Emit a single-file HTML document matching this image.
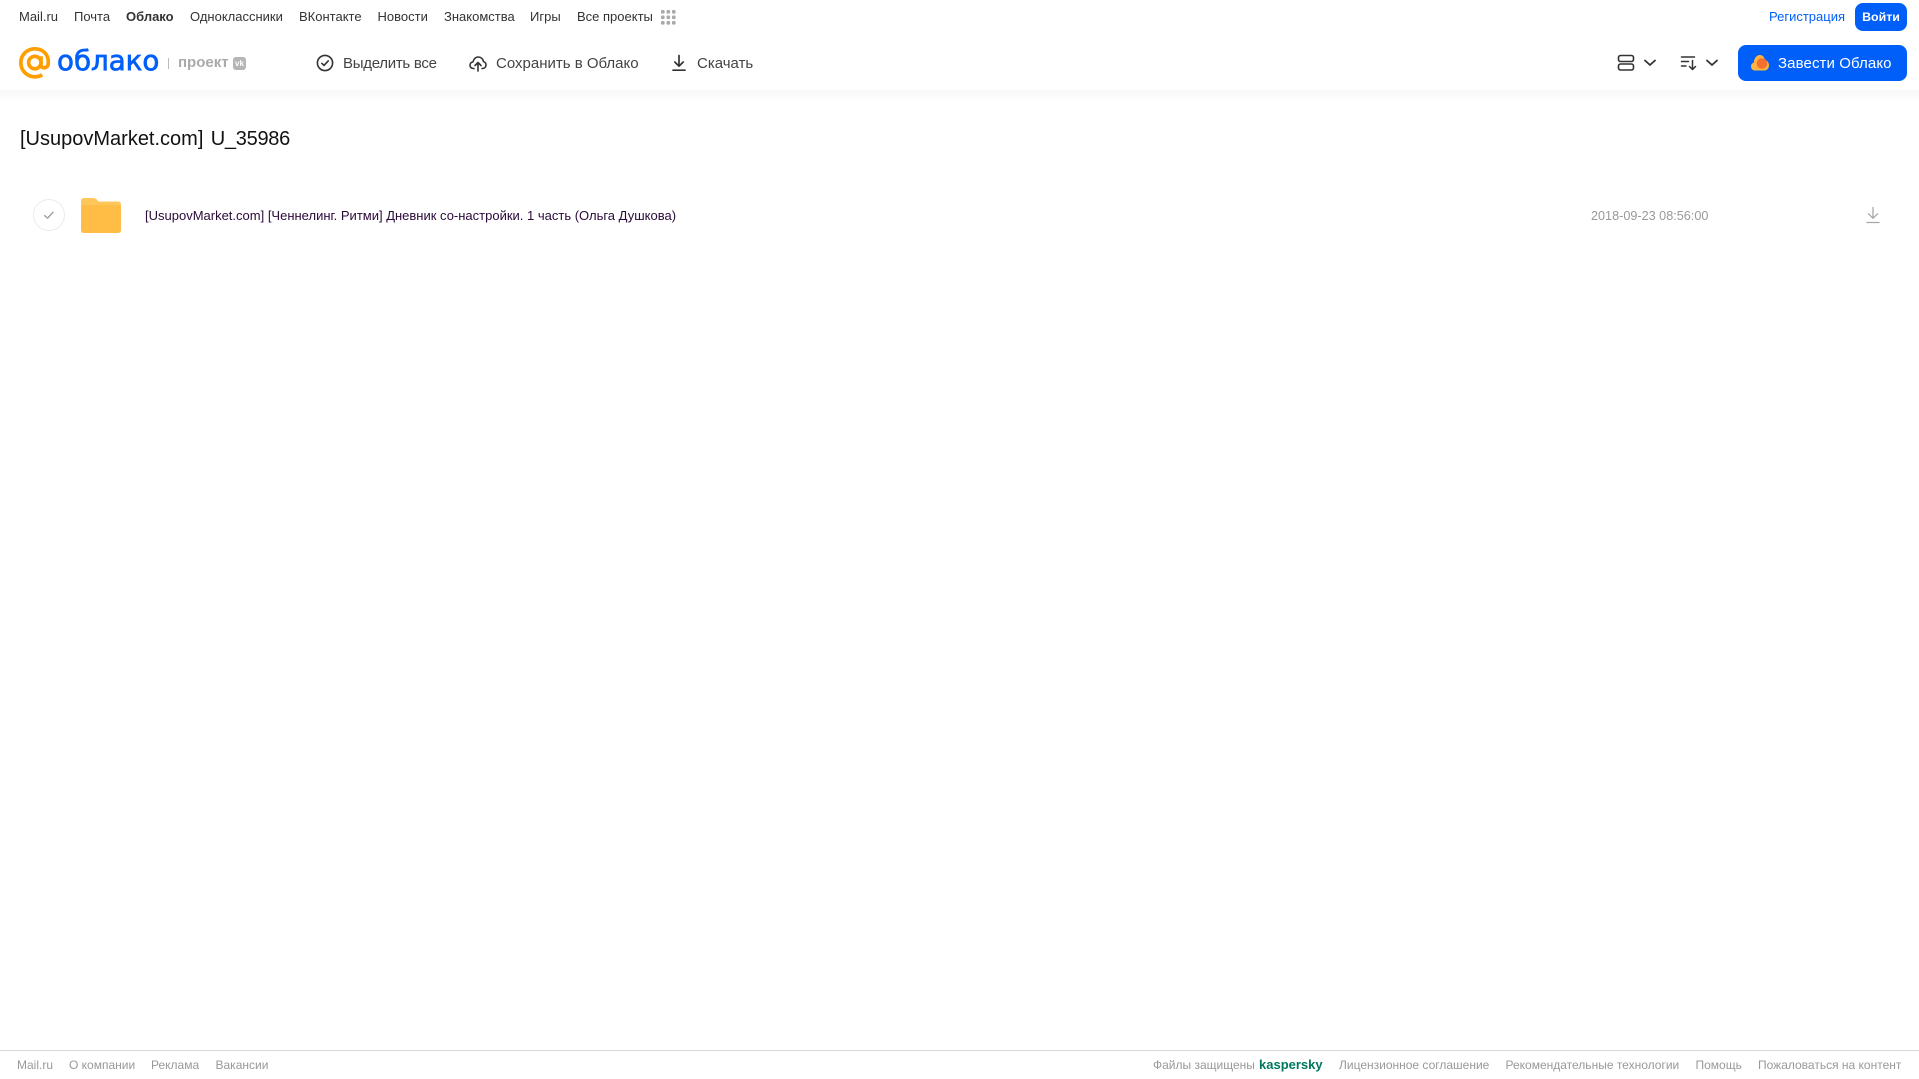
<!DOCTYPE html>
<html lang="ru">
<head>
<meta charset="utf-8">
<title>Облако</title>
<style>
html,body{margin:0;padding:0;background:#fff;width:1919px;height:1079px;overflow:hidden}
body{position:relative;font-family:"Liberation Sans","Noto Sans CJK SC",sans-serif}
.t{position:absolute;white-space:nowrap;line-height:20px;margin:0}
.n{font-size:13px;color:#333;top:7px}
.a{font-size:15px;color:#444;top:53.500px}
.f{font-size:12px;color:#999;top:1055px}
svg{position:absolute;overflow:visible}
</style>
</head>
<body>
<div style="position:absolute;left:0;top:90px;width:1919px;height:12px;background:linear-gradient(#f7f7f7,#fff)"></div>

<span class="t n" style="left:19px">Mail.ru</span>
<span class="t n" style="left:74px">Почта</span>
<span class="t n" style="left:126px;font-weight:bold">Облако</span>
<span class="t n" style="left:190px">Одноклассники</span>
<span class="t n" style="left:299px">ВКонтакте</span>
<span class="t n" style="left:377.500px">Новости</span>
<span class="t n" style="left:444px">Знакомства</span>
<span class="t n" style="left:530px">Игры</span>
<span class="t n" style="left:577px">Все проекты</span>
<svg style="left:661px;top:10px" width="15" height="15" fill="#aaa">
<rect x="0" y="0" width="3.6" height="3.6" rx="1"/><rect x="5.5" y="0" width="3.6" height="3.6" rx="1"/><rect x="11" y="0" width="3.6" height="3.6" rx="1"/>
<rect x="0" y="5.5" width="3.6" height="3.6" rx="1"/><rect x="5.5" y="5.5" width="3.6" height="3.6" rx="1"/><rect x="11" y="5.5" width="3.6" height="3.6" rx="1"/>
<rect x="0" y="11" width="3.6" height="3.6" rx="1"/><rect x="5.5" y="11" width="3.6" height="3.6" rx="1"/><rect x="11" y="11" width="3.6" height="3.6" rx="1"/>
</svg>

<svg style="left:19px;top:47px" width="32" height="32" viewBox="0 0 33 33" fill="none" stroke="#ff9e00" stroke-width="3.8">
<circle cx="16.3" cy="16" r="6.4"/>
<path d="M22.7 9.6V18.5C22.7 22.6 29.8 22.6 30.2 17.2C31 7.5 24.5 1.9 16.3 1.9C8.2 1.9 1.9 8.2 1.9 16.2C1.9 24.6 8.5 30.8 16.5 30.8C19.5 30.8 21.8 30 24 28.8"/>
</svg>
<span class="t" style="left:57px;top:44px;font-family:'DejaVu Sans',sans-serif;font-size:27.7px;line-height:34px;color:#005ff9;-webkit-text-stroke:.7px #005ff9">облако</span>
<div style="position:absolute;left:168px;top:58px;width:1px;height:11px;background:#bbb"></div>
<span class="t" style="left:178px;top:53px;font-size:15px;color:#aaa;font-weight:bold">проект</span>
<div style="position:absolute;left:233px;top:57px;width:13px;height:13px;border-radius:3px;background:#b5b5b5;color:#fff;font:bold 8px/13px 'Liberation Sans',sans-serif;text-align:center">vk</div>

<svg style="left:316px;top:54px" width="18" height="18" viewBox="0 0 18 18" fill="none" stroke="#333" stroke-width="1.6" stroke-linecap="round" stroke-linejoin="round">
<circle cx="9" cy="9" r="7.6"/><path d="M5.8 9.3L8 11.4L12.2 6.9"/>
</svg>
<span class="t a" style="left:343px;letter-spacing:-.28px">Выделить все</span>

<svg style="left:469px;top:54px" width="18" height="18" viewBox="0 0 18 18" fill="none" stroke="#333" stroke-width="1.6" stroke-linecap="round" stroke-linejoin="round">
<path d="M5 14.5H4.4C2.4 14.5 1 13 1 11.2C1 9.4 2.3 8 4 7.9C4.5 5.1 6.6 3 9.3 3C12 3 14.1 5 14.5 7.6C16 8 17 9.4 17 11C17 13 15.6 14.5 13.6 14.5H13"/>
<path d="M9 17V9M6 11.5L9 8.5L12 11.5"/>
</svg>
<span class="t a" style="left:496px">Сохранить в Облако</span>

<svg style="left:670px;top:54px" width="18" height="18" viewBox="0 0 18 18" fill="none" stroke="#333" stroke-width="1.7" stroke-linecap="round" stroke-linejoin="round">
<path d="M9 1.5V12M4.8 8L9 12.2L13.2 8M3 16.2H15"/>
</svg>
<span class="t a" style="left:697px">Скачать</span>

<span class="t n" style="left:1769px;color:#005ff9">Регистрация</span>
<div style="position:absolute;left:1855px;top:3px;width:52px;height:28px;border-radius:8px;background:#005ff9;color:#fff;font-size:12.4px;line-height:28px;text-align:center;font-weight:bold">Войти</div>

<svg style="left:1617px;top:54px" width="18" height="18" viewBox="0 0 18 18" fill="none" stroke="#333" stroke-width="1.6">
<rect x="1.5" y="1.5" width="15" height="6" rx="2"/><rect x="1.5" y="10" width="15" height="6" rx="2"/>
</svg>
<svg style="left:1643px;top:58px" width="14" height="10" viewBox="0 0 14 10" fill="none" stroke="#333" stroke-width="1.8" stroke-linecap="round" stroke-linejoin="round"><path d="M2 2.5L7 7L12 2.5"/></svg>
<svg style="left:1680px;top:54px" width="18" height="18" viewBox="0 0 18 18" fill="none" stroke="#333" stroke-width="1.5" stroke-linecap="round" stroke-linejoin="round">
<path d="M1.5 3H14.5M1.5 7.5H8.5M1.5 12H6M12.5 6.5V15.5M9.5 12.5L12.5 15.5L15.5 12.5"/>
</svg>
<svg style="left:1705px;top:58px" width="14" height="10" viewBox="0 0 14 10" fill="none" stroke="#333" stroke-width="1.8" stroke-linecap="round" stroke-linejoin="round"><path d="M2 2.5L7 7L12 2.5"/></svg>

<div style="position:absolute;left:1738px;top:45px;width:169px;height:36px;border-radius:8px;background:#005ff9"></div>
<svg style="left:1750px;top:54px" width="20" height="18" viewBox="0 0 20 18">
<path d="M5 16.500C2.400 16.500 1 14.500 1 12.500C1 10.500 2.200 9 3.800 8.600C4 4.500 6.500 1 9.800 1C12.500 1 14.300 3 14.900 6C17.400 6.400 19 8.700 19 11.300C19 14 17.200 16.500 14.600 16.500Z" fill="#ffb340"/>
<circle cx="12" cy="9.500" r="5.300" fill="#f4702c"/>
</svg>
<span class="t a" style="left:1778px;color:#fff;letter-spacing:.1px">Завести Облако</span>

<h1 class="t" style="left:20px;top:126px;font-size:20px;line-height:26px;font-weight:normal;color:#111;word-spacing:1.800px">[UsupovMarket.com] <span style="letter-spacing:-.28px">U_35986</span></h1>

<div style="position:absolute;left:33px;top:199px;width:30px;height:30px;border:1px solid #ececec;border-radius:50%"></div>
<svg style="left:43px;top:209px" width="12" height="12" viewBox="0 0 12 12" fill="none" stroke="#999" stroke-width="1.3" stroke-linecap="round" stroke-linejoin="round"><path d="M1.7 6.6L4.6 9.2L10 3.2"/></svg>

<svg style="left:81px;top:198px" width="40" height="35" viewBox="0 0 40 35">
<path d="M0 3C0 1.300 1.300 0 3 0H12.500C14 0 15 .6 16 1.800L17.600 3.500H37C38.700 3.500 40 4.800 40 6.500V32C40 33.700 38.700 35 37 35H3C1.300 35 0 33.700 0 32Z" fill="#ffc75a"/>
<path d="M0 9.500C0 8.100 1.100 7 2.500 7H37.500C38.900 7 40 8.100 40 9.500V32C40 33.700 38.700 35 37 35H3C1.300 35 0 33.700 0 32Z" fill="#ffbd45"/>
</svg>

<span class="t" style="left:145px;top:206px;font-size:13px;color:#2a0a38">[UsupovMarket.com] [Ченнелинг. Ритми] Дневник со-настройки. 1 часть (Ольга Душкова)</span>
<span class="t" style="left:1591px;top:206px;font-size:12.65px;color:#999">2018-09-23 08:56:00</span>
<svg style="left:1864px;top:206px" width="18" height="18" viewBox="0 0 18 18" fill="none" stroke="#a8a8a8" stroke-width="1.3" stroke-linecap="round" stroke-linejoin="round">
<path d="M9 1.500V12M4.500 7.800L9 12.300L13.500 7.800M3 16.500H15"/>
</svg>

<div style="position:absolute;left:0;top:1050px;width:1919px;height:1px;background:#d8d8d8"></div>
<span class="t f" style="left:17px">Mail.ru</span>
<span class="t f" style="left:69px">О компании</span>
<span class="t f" style="left:151px">Реклама</span>
<span class="t f" style="left:215.500px">Вакансии</span>
<span class="t f" style="left:1153px">Файлы защищены</span>
<span class="t f" style="left:1259px;color:#00775f;font-weight:bold;font-size:13px">kaspersky</span>
<span class="t f" style="left:1339px">Лицензионное соглашение</span>
<span class="t f" style="left:1505.500px">Рекомендательные технологии</span>
<span class="t f" style="left:1695.500px">Помощь</span>
<span class="t f" style="left:1758px">Пожаловаться на контент</span>
</body>
</html>
